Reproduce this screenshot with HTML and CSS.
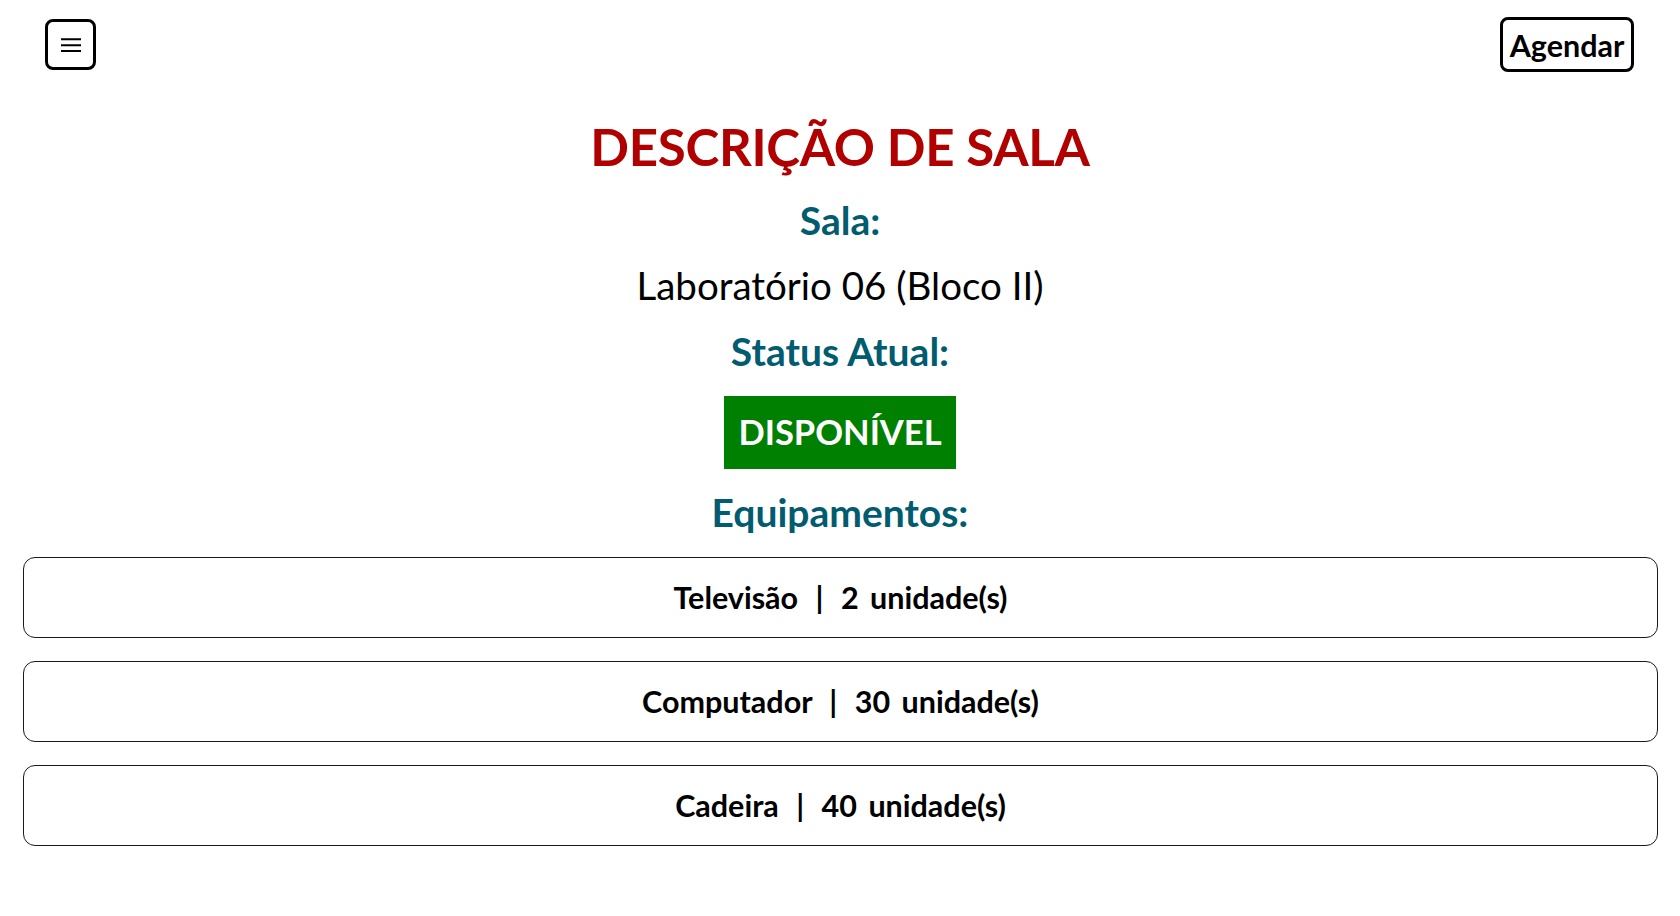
FILE: index.html
```html
<!DOCTYPE html>
<html lang="pt-BR">
<head>
<meta charset="utf-8">
<title>Descrição de Sala</title>
<link rel="stylesheet" href="styles.css">
</head>
<body>
<header class="topbar">
  <button class="menu-btn" aria-label="Menu">
    <svg width="22" height="16" viewBox="0 0 22 16" aria-hidden="true">
      <path d="M1 2.3h20M1 8.3h20M1 14h20" stroke="#000" stroke-width="2" stroke-linecap="butt" fill="none"/>
    </svg>
  </button>
  <button class="agendar-btn">Agendar</button>
</header>
<main class="content">
  <h1 class="title">DESCRIÇÃO DE SALA</h1>
  <h2 class="label label-sala">Sala:</h2>
  <p class="room-name">Laboratório 06 (Bloco II)</p>
  <h2 class="label label-status">Status Atual:</h2>
  <div class="status">DISPONÍVEL</div>
  <h2 class="label label-equip">Equipamentos:</h2>
  <ul class="equip-list">
    <li class="equip-card">Televisão <span class="sep">|</span> 2 unidade(s)</li>
    <li class="equip-card">Computador <span class="sep">|</span> 30 unidade(s)</li>
    <li class="equip-card">Cadeira <span class="sep">|</span> 40 unidade(s)</li>
  </ul>
</main>
</body>
</html>
```
FILE: styles.css
```css
html, body {
  margin: 0;
  padding: 0;
  background: #ffffff;
}
body {
  font-family: Lato, "Open Sans", sans-serif;
  color: #000;
}
.topbar {
  display: flex;
  justify-content: space-between;
  align-items: center;
  padding: 17px 46px 0 45px;
}
.menu-btn {
  width: 51px;
  height: 51px;
  box-sizing: border-box;
  border: 3px solid #000;
  border-radius: 8px;
  background: #fff;
  padding: 0;
  display: flex;
  align-items: center;
  justify-content: center;
}
.menu-btn svg { display: block; }
.agendar-btn {
  width: 134px;
  height: 55px;
  box-sizing: border-box;
  border: 3px solid #000;
  border-radius: 8px;
  background: #fff;
  padding: 0;
  font-family: Lato, sans-serif;
  font-weight: 700;
  font-size: 30.5px;
  color: #000;
}
.content {
  display: flex;
  flex-direction: column;
  align-items: center;
  text-align: center;
}
.title {
  margin: 44px 0 0;
  font-size: 51px;
  letter-spacing: -0.3px;
  line-height: 1.2;
  font-weight: 700;
  color: #b00000;
}
.label {
  margin: 0;
  font-size: 39px;
  line-height: 1.2;
  font-weight: 700;
  color: #005c6e;
}
.label-sala { margin-top: 19.6px; }
.room-name {
  margin: 18.7px 0 0;
  font-size: 38.5px;
  line-height: 1.2;
  font-weight: 400;
}
.label-status { margin-top: 19.3px; }
.status {
  margin-top: 21.7px;
  box-sizing: border-box;
  width: 232px;
  height: 73px;
  padding-top: 15px;
  background: #008000;
  color: #fff;
  font-size: 34.5px;
  line-height: 1.2;
  font-weight: 700;
}
.label-equip { margin-top: 19.5px; }
.equip-list {
  list-style: none;
  align-self: stretch;
  margin: 21.7px 22px 0 23px;
  padding: 0;
  display: flex;
  flex-direction: column;
  gap: 23px;
}
.equip-card {
  box-sizing: border-box;
  height: 81px;
  border: 1px solid #1a1a1a;
  border-radius: 12px;
  display: flex;
  align-items: center;
  justify-content: center;
  font-size: 30.5px;
  word-spacing: 4px;
  line-height: 1.2;
  font-weight: 700;
  white-space: pre;
}
.sep {
  margin: 0 6px;
}
```
